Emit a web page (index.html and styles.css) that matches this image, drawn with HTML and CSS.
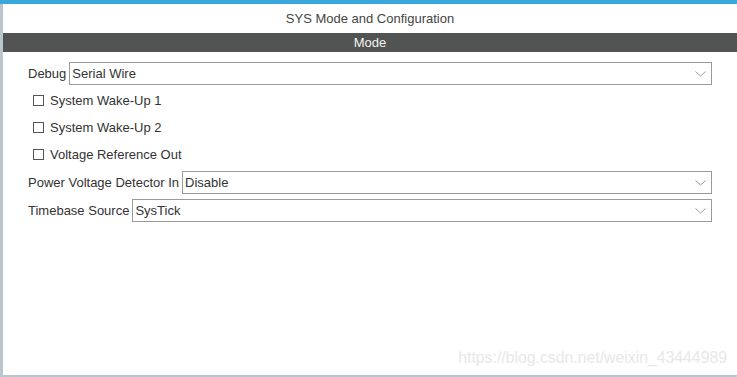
FILE: index.html
```html
<!DOCTYPE html>
<html lang="en">
<head>
    <meta charset="UTF-8">
    <meta name="viewport" content="width=device-width, initial-scale=1.0">
    <title>SYS Mode and Configuration</title>
    <link rel="stylesheet" href="styles.css">
</head>
<body>
    <div class="topbar"></div>
    <div class="panel">
        <div class="title">SYS Mode and Configuration</div>
        <div class="section">Mode</div>
        <div class="form">
            <div class="row">
                <span class="label">Debug</span>
                <div class="select">
                    <span>Serial Wire</span>
                    <svg class="chevron" width="11" height="6" viewBox="0 0 11 6"><polyline points="0.5,0.5 5.5,5 10.5,0.5" fill="none" stroke="#9a9a9a" stroke-width="1"/></svg>
                </div>
            </div>
            <div class="row check"><span class="box"></span>System Wake-Up 1</div>
            <div class="row check"><span class="box"></span>System Wake-Up 2</div>
            <div class="row check"><span class="box"></span>Voltage Reference Out</div>
            <div class="row power">
                <span class="label">Power Voltage Detector In</span>
                <div class="select">
                    <span>Disable</span>
                    <svg class="chevron" width="11" height="6" viewBox="0 0 11 6"><polyline points="0.5,0.5 5.5,5 10.5,0.5" fill="none" stroke="#9a9a9a" stroke-width="1"/></svg>
                </div>
            </div>
            <div class="row timebase">
                <span class="label">Timebase Source</span>
                <div class="select">
                    <span>SysTick</span>
                    <svg class="chevron" width="11" height="6" viewBox="0 0 11 6"><polyline points="0.5,0.5 5.5,5 10.5,0.5" fill="none" stroke="#9a9a9a" stroke-width="1"/></svg>
                </div>
            </div>
        </div>
        <div class="watermark">https://blog.csdn.net/weixin_43444989</div>
    </div>
</body>
</html>
```

FILE: styles.css
```css
html, body {
  margin: 0;
  height: 100%;
}

body {
  display: flex;
  flex-direction: column;
  font-family: "Liberation Sans", Arial, sans-serif;
  font-size: 13px;
  color: #333333;
  background-color: #ffffff;
}

.topbar {
  height: 4px;
  background-color: #3aa8dc; /* blue window strip */
}

.panel {
  position: relative;
  flex: 1;
  border-left: 3px solid #b9c5cf;
  border-bottom: 2px solid #b9c5cf;
}

.title {
  height: 29px;
  line-height: 29px;
  text-align: center;
  color: #444444;
}

.section {
  height: 19px;
  line-height: 19px;
  text-align: center;
  background-color: #525453;
  color: #f2f2f2;
}

.form {
  display: flex;
  flex-direction: column;
  gap: 4px;
  padding: 10px 25px 0 25px;
}

.row {
  display: flex;
  align-items: center;
  gap: 3px;
  height: 23px;
}

.row.check {
  padding-left: 5px;
  gap: 6px;
}

.row.power {
  margin-top: 1px;
}

.row.timebase {
  margin-top: 1px;
}

.label {
  white-space: nowrap;
}

.select {
  flex: 1;
  display: flex;
  align-items: center;
  justify-content: space-between;
  height: 23px;
  box-sizing: border-box;
  border: 1px solid #9a9a9a;
  padding: 0 5px 0 2px;
  background-color: #ffffff;
}

.chevron {
  display: block;
}

.box {
  width: 11px;
  height: 11px;
  box-sizing: border-box;
  border: 1px solid #555555;
  background-color: #ffffff;
}

.watermark {
  position: absolute;
  right: 10px;
  bottom: 8px;
  font-size: 15.8px;
  color: #e8e8e8;
}
```
